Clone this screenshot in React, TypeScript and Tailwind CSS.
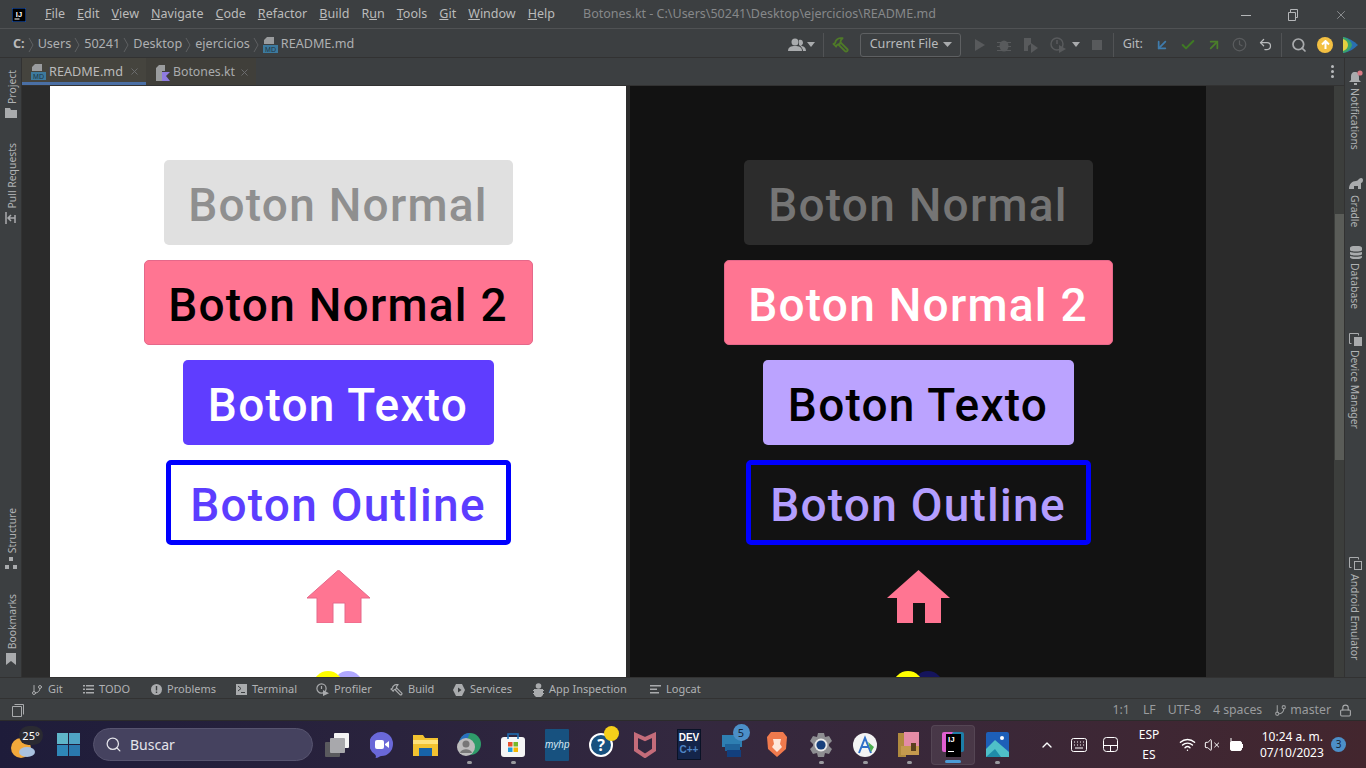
import { ArrowDownLeft, ArrowUpRight, Check, ChevronUp, Clock, GitBranch, Hammer, Lock, Search, Undo2, VolumeX, Wifi, X } from "lucide-react";

const menus: [string, string, string][] = [
  ["", "F", "ile"],
  ["", "E", "dit"],
  ["", "V", "iew"],
  ["", "N", "avigate"],
  ["", "C", "ode"],
  ["", "R", "efactor"],
  ["", "B", "uild"],
  ["R", "u", "n"],
  ["", "T", "ools"],
  ["", "G", "it"],
  ["", "W", "indow"],
  ["", "H", "elp"],
];

function MdIcon() {
  return (
    <svg width="15" height="16" viewBox="0 0 15 16" className="shrink-0">
      <path d="M4 0h7v7H1V3z" fill="#9a9c9e" />
      <rect x="0" y="8" width="15" height="8" fill="#3d7a9e" />
      <text x="7.5" y="15" fontSize="7" textAnchor="middle" fill="#1f3442" fontFamily="Liberation Sans">MD</text>
    </svg>
  );
}

function KtIcon() {
  return (
    <svg width="14" height="16" viewBox="0 0 14 16" className="shrink-0">
      <path d="M3 0h6v6h-3v10H0V3z" fill="#9a9c9e" />
      <path d="M6 7h8l-4 4 4 5H6z" fill="#8f7be0" />
    </svg>
  );
}

function IJLogo({ size = 14 }: { size?: number }) {
  return (
    <svg width={size} height={size} viewBox="0 0 14 14">
      <rect width="14" height="14" fill="#000" stroke="#1b5fd1" strokeWidth="1" />
      <text x="7" y="8.5" fontSize="7.5" fontWeight="700" textAnchor="middle" fill="#fff" fontFamily="Liberation Sans">IJ</text>
      <rect x="2.5" y="10.5" width="5" height="1" fill="#fff" />
    </svg>
  );
}

function TitleBar() {
  return (
    <div className="h-[29px] shrink-0 flex items-center border-b border-[#505254] pt-[1px]">
      <div className="w-[45px] pl-[12px] flex">
        <IJLogo />
      </div>
      <div className="flex gap-[12.1px] text-[12.5px] text-[#bbbbbb]">
        {menus.map(([a, b, c]) => (
          <span key={b + c}>
            {a}
            <u>{b}</u>
            {c}
          </span>
        ))}
      </div>
      <span className="ml-[28px] text-[12.5px] text-[#86888a]">Botones.kt - C:\Users\50241\Desktop\ejercicios\README.md</span>
      <div className="ml-auto flex items-center text-[#b4b6b8]">
        <svg width="12" height="12" viewBox="0 0 12 12" className="mr-[35px]">
          <path d="M1 6.5h10" stroke="currentColor" />
        </svg>
        <svg width="12" height="12" viewBox="0 0 12 12" className="mr-[35px]" fill="none" stroke="currentColor">
          <path d="M1.5 3.5h7v8h-7zM3.5 3.5V.5h7v8h-2" />
        </svg>
        <X size={14} strokeWidth={1.1} className="mr-[18px]" />
      </div>
    </div>
  );
}

function Crumb({ label }: { label: string }) {
  return (
    <>
      <span>{label}</span>
      <svg width="7" height="16" viewBox="0 0 7 16" className="mx-[3px]" fill="none" stroke="#5e6062">
        <path d="M1 1l4 7-4 7" />
      </svg>
    </>
  );
}

function NavBar() {
  return (
    <div className="h-[29px] shrink-0 flex items-center border-b border-[#323232] pt-[3px] text-[12.6px] text-[#aeb0b2]">
      <span className="ml-[13px] font-bold text-[#bbbbbb]">C:</span>
      <svg width="7" height="16" viewBox="0 0 7 16" className="mx-[3px]" fill="none" stroke="#5e6062">
        <path d="M1 1l4 7-4 7" />
      </svg>
      <Crumb label="Users" />
      <Crumb label="50241" />
      <Crumb label="Desktop" />
      <Crumb label="ejercicios" />
      <MdIcon />
      <span className="ml-[3px]">README.md</span>

      <div className="ml-auto flex items-center h-full">
        <svg width="18" height="14" viewBox="0 0 18 14" fill="#a9abad">
          <circle cx="7" cy="4" r="3.5" />
          <path d="M0 13c0-4 3-5 7-5s7 1 7 5z" />
          <path d="M11 2c2-1 4 0 4 3 0 1-1 2-2 3 2 0 5 1 5 5h-3c0-2-2-5-4-6z" />
        </svg>
        <svg width="8" height="5" viewBox="0 0 8 5" className="ml-[1px]" fill="#a9abad">
          <path d="M0 0h8L4 5z" />
        </svg>
        <div className="w-px h-[24px] bg-[#515355] ml-[8px]" />
        <Hammer size={17} color="#4f7a28" strokeWidth={2.6} className="ml-[8px] -scale-x-100" />
        <div className="ml-[11px] w-[101px] h-[24px] border border-[#5e6062] rounded-[3px] flex items-center justify-between pl-[9px] pr-[8px] text-[#b8babc]">
          <span>Current File</span>
          <svg width="9" height="5" viewBox="0 0 9 5" fill="#a9abad">
            <path d="M0 0h9L4.5 5z" />
          </svg>
        </div>
        <svg width="12" height="14" viewBox="0 0 12 14" className="ml-[13px]" fill="#585a5c">
          <path d="M1 1l10 6-10 6z" />
        </svg>
        <svg width="14" height="14" viewBox="0 0 14 14" className="ml-[11px]" fill="#585a5c">
          <ellipse cx="7" cy="8" rx="4.5" ry="5.5" />
          <path d="M0 4h14v1H0zM0 8h14v1H0zM0 12h14v1H0z" />
        </svg>
        <svg width="16" height="16" viewBox="0 0 16 16" className="ml-[12px]" fill="#585a5c">
          <path d="M1 1h7v6L5 9v5H1z" />
          <path d="M8 6l7 5-7 5z" />
        </svg>
        <svg width="17" height="16" viewBox="0 0 17 16" className="ml-[11px]" fill="none" stroke="#585a5c" strokeWidth="1.5">
          <circle cx="7" cy="7" r="6" />
          <path d="M7 3v4" />
          <path d="M9 8l7 4-7 4z" fill="#585a5c" stroke="none" />
        </svg>
        <svg width="8" height="5" viewBox="0 0 8 5" className="ml-[5px]" fill="#a9abad">
          <path d="M0 0h8L4 5z" />
        </svg>
        <div className="ml-[12px] w-[10px] h-[10px] bg-[#585a5c]" />
        <div className="w-px h-[24px] bg-[#515355] ml-[11px]" />
        <span className="ml-[9px] text-[#b8babc]">Git:</span>
        <ArrowDownLeft size={16} color="#3f7cad" strokeWidth={2.6} className="ml-[11px]" />
        <Check size={16} color="#3f7a24" strokeWidth={3} className="ml-[10px]" />
        <ArrowUpRight size={16} color="#4b7f2a" strokeWidth={2.6} className="ml-[10px]" />
        <Clock size={15} color="#5a5c5e" strokeWidth={2} className="ml-[10px]" />
        <Undo2 size={15} color="#b8babc" strokeWidth={2} className="ml-[11px]" />
        <div className="w-px h-[24px] bg-[#515355] ml-[8px]" />
        <Search size={16} color="#a9abad" strokeWidth={2.6} className="ml-[9px]" />
        <div className="ml-[10px] w-[16px] h-[16px] rounded-full bg-[#f3c042] flex items-center justify-center">
          <svg width="9" height="9" viewBox="0 0 9 9" fill="none" stroke="#fff" strokeWidth="2">
            <path d="M4.5 9V2M1 4.5l3.5-3.5L8 4.5" />
          </svg>
        </div>
        <svg width="15" height="16" viewBox="0 0 15 16" className="ml-[10px] mr-[8px]">
          <path d="M0 0c6 1 11 4 15 8-4 4-9 7-15 8z" fill="#2a6fb0" />
          <path d="M0 0c5 1 8 4 9 8-1 4-4 7-9 8z" fill="#3aa36a" />
          <path d="M0 2c3 1 5 3 5 6s-2 5-5 6z" fill="#e3d040" />
        </svg>
      </div>
    </div>
  );
}

function Tabs() {
  return (
    <div className="h-[28px] shrink-0 flex bg-[#3c3f41] border-b border-[#323232]">
      <div className="w-[124px] pl-[9px] pt-[3px] flex items-center gap-[3px] bg-[#45443e] border-b-[3px] border-[#4a6fa5] text-[12.7px] text-[#bbbbbb]">
        <MdIcon />
        <span>README.md</span>
        <X size={11} color="#6e7072" className="ml-[3px]" />
      </div>
      <div className="w-[110px] pl-[10px] flex items-center gap-[3px] bg-[#403f3a] text-[12.3px] text-[#a9abad] pt-[2px]">
        <KtIcon />
        <span>Botones.kt</span>
        <X size={11} color="#6e7072" className="ml-[1px]" />
      </div>
      <div className="ml-auto mr-[10px] flex flex-col justify-center gap-[2px]">
        <div className="w-[3px] h-[3px] rounded-full bg-[#b8babc]" />
        <div className="w-[3px] h-[3px] rounded-full bg-[#b8babc]" />
        <div className="w-[3px] h-[3px] rounded-full bg-[#b8babc]" />
      </div>
    </div>
  );
}

function Preview({ dark }: { dark: boolean }) {
  const btn = "h-[85px] shrink-0 rounded-[5px] flex items-center justify-center pt-[5px] font-['Roboto',sans-serif] font-medium text-[46px] tracking-[1.25px]";
  return (
    <div className={`w-[576px] h-full shrink-0 overflow-hidden flex flex-col items-center pt-[74px] ${dark ? "bg-[#121212]" : "bg-white"}`}>
      <div className={`${btn} w-[349px] ${dark ? "bg-[#2c2c2c] text-[#757575]" : "bg-[#e0e0e0] text-[#8f8f8f]"}`}>Boton Normal</div>
      <div className={`${btn} w-[389px] mt-[15px] bg-[#ff7592] border border-[#e5688a] ${dark ? "text-white" : "text-black"}`}>Boton Normal 2</div>
      <div className={`${btn} w-[311px] mt-[15px] ${dark ? "bg-[#bba3ff] text-black" : "bg-[#5f3dff] text-white"}`}>Boton Texto</div>
      <div className={`${btn} w-[345px] mt-[15px] bg-transparent border-[5px] border-[#0000ff] ${dark ? "text-[#b49eff]" : "text-[#5c3dff]"}`}>Boton Outline</div>
      <svg width="63" height="53" viewBox="0 0 63 53" className="mt-[25px] shrink-0">
        <path d="M31.5 0L63 28h-9v25H38V33H26v20H10V28H0z" fill="#ff7592" stroke={dark ? "none" : "#e5688a"} strokeWidth="1" />
      </svg>
      <div className="mt-[48px] flex shrink-0">
        <div className="w-[30px] h-[30px] rounded-full bg-[#ffff00] relative z-10" />
        <div className={`w-[30px] h-[30px] rounded-full -ml-[10px] ${dark ? "bg-[#14145c]" : "bg-[#b0a8ff]"}`} />
      </div>
    </div>
  );
}

function VText({ children, up }: { children: string; up?: boolean }) {
  return <span className={`block [writing-mode:vertical-rl] text-[10.4px] leading-none text-[#b0b2b4] ${up ? "rotate-180 translate-x-[2px]" : "-translate-x-[1px]"}`}>{children}</span>;
}

function LeftStripe() {
  return (
    <div className="w-[22px] shrink-0 flex flex-col items-center pt-[12px] pb-[12px] border-r border-[#323232]">
      <VText up>Project</VText>
      <svg width="12" height="10" viewBox="0 0 12 10" fill="#a9abad" className="mt-[4px] shrink-0">
        <path d="M0 0h5l1 2h6v8H0z" />
      </svg>
      <div className="mt-[25px]">
        <VText up>Pull Requests</VText>
      </div>
      <svg width="11" height="12" viewBox="0 0 11 12" fill="none" stroke="#a9abad" strokeWidth="1.5" className="mt-[4px] shrink-0">
        <path d="M1 0v12M10 6H4M6 3L3 6l3 3M10 3v8" />
      </svg>
      <div className="mt-auto">
        <VText up>Structure</VText>
      </div>
      <svg width="12" height="12" viewBox="0 0 12 12" fill="#a9abad" className="mt-[3px] shrink-0">
        <path d="M4 0h4v4H4zM0 8h4v4H0zM8 8h4v4H8z" />
      </svg>
      <div className="mt-[25px]">
        <VText up>Bookmarks</VText>
      </div>
      <svg width="10" height="12" viewBox="0 0 10 12" fill="#a9abad" className="mt-[4px] shrink-0">
        <path d="M0 0h10v12L5 8l-5 4z" />
      </svg>
    </div>
  );
}

function RightStripe() {
  return (
    <div className="w-[22px] shrink-0 flex flex-col items-center pt-[12px] border-l border-[#323232]">
      <svg width="14" height="15" viewBox="0 0 14 15" fill="#a9abad" className="shrink-0">
        <path d="M6 2c-3 0-4 2-4 5v3l-2 2h12l-2-2V7c0-3-1-5-4-5zM5 13h3v2H5z" />
        <circle cx="11" cy="3" r="2.6" fill="#d97a85" />
      </svg>
      <div className="mt-[3px]">
        <VText>Notifications</VText>
      </div>
      <svg width="14" height="12" viewBox="0 0 14 12" fill="#a9abad" className="mt-[27px] shrink-0">
        <path d="M0 12c0-5 3-8 7-8 1 0 2-1 3-2 2-2 4-1 4 1s-1 3-2 3v6H9v-3H5v3z" />
      </svg>
      <div className="mt-[6px]">
        <VText>Gradle</VText>
      </div>
      <svg width="12" height="13" viewBox="0 0 12 13" fill="#a9abad" className="mt-[19px] shrink-0">
        <path d="M0 2c0-3 12-3 12 0v2c0 2-12 2-12 0zM0 6c3 1 9 1 12 0v2c0 2-12 2-12 0zM0 10c3 1 9 1 12 0v1c0 3-12 3-12 0z" />
      </svg>
      <div className="mt-[4px]">
        <VText>Database</VText>
      </div>
      <svg width="13" height="13" viewBox="0 0 13 13" fill="none" stroke="#a9abad" className="mt-[24px] shrink-0">
        <path d="M2.5 10.5h-2v-10h9v2" />
        <rect x="5.5" y="4.5" width="7" height="8" fill="#a9abad" />
      </svg>
      <div className="mt-[4px]">
        <VText>Device Manager</VText>
      </div>
      <svg width="13" height="13" viewBox="0 0 13 13" fill="none" stroke="#a9abad" className="mt-auto shrink-0">
        <path d="M2.5 10.5h-2v-10h9v2" />
        <rect x="5.5" y="4.5" width="7" height="8" />
      </svg>
      <div className="mt-[4px] mb-[17px]">
        <VText>Android Emulator</VText>
      </div>
    </div>
  );
}

function Editor() {
  return (
    <div className="flex-1 min-h-0 flex bg-[#2b2b2b]">
      <div className="w-[28px] shrink-0" />
      <Preview dark={false} />
      <div className="w-[4px] shrink-0" />
      <Preview dark />
      <div className="flex-1" />
      <div className="w-[10px] shrink-0 flex flex-col bg-[#3c3e3c]">
        <div className="h-[128px]" />
        <div className="h-[246px] ml-[1px] bg-[#5a5c58]" />
      </div>
    </div>
  );
}

function ToolItem({ icon, label, w }: { icon: React.ReactNode; label: string; w: string }) {
  return (
    <div className={`flex items-center gap-[5px] ${w}`}>
      {icon}
      <span>{label}</span>
    </div>
  );
}

function BottomTools() {
  return (
    <div className="h-[22px] shrink-0 flex items-center pl-[31px] pt-[3px] text-[11px] text-[#b0b2b4] border-t border-b border-[#323232]">
      <ToolItem
        w="w-[52px]"
        label="Git"
        icon={<GitBranch size={12} strokeWidth={2} color="#a9abad" />}
      />
      <ToolItem
        w="w-[68px]"
        label="TODO"
        icon={
          <svg width="11" height="9" viewBox="0 0 11 9" fill="#a9abad">
            <path d="M0 0h2v1.5H0zM3 0h8v1.5H3zM0 3.5h2V5H0zM3 3.5h8V5H3zM0 7h2v1.5H0zM3 7h8v1.5H3z" />
          </svg>
        }
      />
      <ToolItem
        w="w-[85px]"
        label="Problems"
        icon={
          <svg width="11" height="11" viewBox="0 0 11 11">
            <circle cx="5.5" cy="5.5" r="5.5" fill="#a9abad" />
            <path d="M4.8 2h1.4v4.5H4.8zM4.8 7.5h1.4V9H4.8z" fill="#3c3f41" />
          </svg>
        }
      />
      <ToolItem
        w="w-[80px]"
        label="Terminal"
        icon={
          <svg width="11" height="11" viewBox="0 0 11 11">
            <rect width="11" height="11" fill="#a9abad" />
            <path d="M2 2l3 2.5L2 7M5 8.5h4" stroke="#3c3f41" fill="none" />
          </svg>
        }
      />
      <ToolItem
        w="w-[74px]"
        label="Profiler"
        icon={
          <svg width="13" height="13" viewBox="0 0 13 13" fill="none" stroke="#a9abad" strokeWidth="1.2">
            <circle cx="5.5" cy="5.5" r="4.6" />
            <path d="M5.5 3v3" />
            <path d="M7 7l6 3.2-6 2.8z" fill="#a9abad" stroke="none" />
          </svg>
        }
      />
      <ToolItem
        w="w-[63px]"
        label="Build"
        icon={<Hammer size={13} color="#a9abad" strokeWidth={2.2} className="-scale-x-100" />}
      />
      <ToolItem
        w="w-[80px]"
        label="Services"
        icon={
          <svg width="12" height="12" viewBox="0 0 12 12">
            <path d="M3 0h6l3 6-3 6H3L0 6z" fill="#a9abad" />
            <path d="M5 3.5L8.5 6 5 8.5z" fill="#3c3f41" />
          </svg>
        }
      />
      <ToolItem
        w="w-[117px]"
        label="App Inspection"
        icon={
          <svg width="11" height="14" viewBox="0 0 11 14" fill="#a9abad">
            <circle cx="5.5" cy="3" r="2.8" />
            <path d="M1 6h9v6l-2 2H3l-2-2zM0 7h11v1H0zM0 10h11v1H0z" />
          </svg>
        }
      />
      <ToolItem
        w="w-[60px]"
        label="Logcat"
        icon={
          <svg width="11" height="9" viewBox="0 0 11 9" fill="#a9abad">
            <path d="M0 0h11v1.6H0zM0 3.5h7v1.6H0zM0 7h9v1.6H0z" />
          </svg>
        }
      />
    </div>
  );
}

function StatusBar() {
  return (
    <div className="h-[22px] shrink-0 flex items-center pt-[1px] text-[12.3px] text-[#9a9c9e] border-b border-[#2b2b2b]">
      <svg width="13" height="14" viewBox="0 0 13 14" fill="none" stroke="#a9abad" className="ml-[12px]">
        <path d="M2.5 1.5h9v10M.5 3.5h9v10h-9z" />
      </svg>
      <div className="ml-auto flex items-center">
        <span>1:1</span>
        <span className="ml-[13px]">LF</span>
        <span className="ml-[12px]">UTF-8</span>
        <span className="ml-[12px]">4 spaces</span>
        <GitBranch size={13} strokeWidth={2} className="ml-[12px] mr-[3px]" />
        <span>master</span>
        <Lock size={13} strokeWidth={2} className="ml-[8px] mr-[14px]" color="#a9abad" />
      </div>
    </div>
  );
}

function Cell({ children, dot, active }: { children: React.ReactNode; dot?: boolean; active?: boolean }) {
  return (
    <div className={`w-[44px] h-[40px] shrink-0 rounded-[4px] relative flex items-center justify-center ${active ? "bg-[#ffffff14] border border-[#ffffff12]" : ""}`}>
      {children}
      {dot && <div className="absolute bottom-[1px] w-[5px] h-[3px] rounded-full bg-[#9a9a9f]" />}
      {active && <div className="absolute bottom-[1px] w-[16px] h-[3px] rounded-full bg-[#4c9bd6]" />}
    </div>
  );
}

function Taskbar() {
  return (
    <div className="h-[47px] shrink-0 flex items-center bg-gradient-to-r from-[#1e1c3a] via-[#33283f] to-[#43262e] text-white">
      <div className="w-[57px] shrink-0 pl-[11px] relative h-full flex items-center">
        <svg width="24" height="26" viewBox="0 0 24 26" className="mt-[6px]">
          <circle cx="10" cy="13" r="10" fill="#f2a93b" />
          <ellipse cx="16" cy="17" rx="8" ry="5" fill="#a9c2e0" />
        </svg>
        <span className="absolute left-[19px] top-[5px] w-[24px] h-[19px] rounded-full bg-[#2a2a32] text-[11px] text-center leading-[19px]">25°</span>
      </div>
      <svg width="23" height="23" viewBox="0 0 23 23" className="shrink-0">
        <path d="M0 0h11v11H0z" fill="#5fb6c9" />
        <path d="M12 0h11v11H12z" fill="#4fa3c4" />
        <path d="M0 12h11v11H0z" fill="#2f87b8" />
        <path d="M12 12h11v11H12z" fill="#2a78ad" />
      </svg>
      <div className="ml-[13px] w-[220px] h-[33px] shrink-0 rounded-full bg-[#45425f] border border-[#57546f] flex items-center pl-[11px] text-[14px] text-[#e4e4ea]">
        <Search size={17} strokeWidth={1.8} />
        <span className="ml-[8px]">Buscar</span>
      </div>
      <div className="ml-[2px] flex items-center">
        <Cell>
          <svg width="24" height="24" viewBox="0 0 24 24">
            <rect x="0" y="9" width="15" height="15" rx="1" fill="#5a5a5e" />
            <rect x="9" y="0" width="15" height="15" rx="1" fill="#f4f4f4" />
            <rect x="5" y="5" width="15" height="15" rx="1" fill="#a8a8ac" />
          </svg>
        </Cell>
        <Cell>
          <svg width="23" height="26" viewBox="0 0 23 26">
            <path d="M11.5 0a11.5 12 0 0 1 0 24c-2 0-3 2-6 2 1-2 0-3-1-4A12 12 0 0 1 11.5 0z" fill="#6a68d8" />
            <rect x="5" y="8" width="9" height="9" rx="2" fill="#fff" />
            <path d="M15 12l4-3v7l-4-3z" fill="#fff" />
          </svg>
        </Cell>
        <Cell>
          <svg width="25" height="22" viewBox="0 0 25 22">
            <path d="M0 1h10l2 3h13v18H0z" fill="#f2c230" />
            <path d="M0 6h25v4H0z" fill="#ffe27a" />
            <rect x="6" y="14" width="13" height="8" fill="#1763a8" />
          </svg>
        </Cell>
        <Cell dot>
          <svg width="24" height="26" viewBox="0 0 24 26">
            <circle cx="13" cy="12" r="11" fill="#2f9c6a" />
            <path d="M13 1a11 11 0 0 0-11 11h6z" fill="#2a6fc0" />
            <circle cx="9" cy="15" r="9" fill="#bcbcbc" />
            <circle cx="9" cy="12" r="3.5" fill="#777" />
            <path d="M3 21c1-5 11-5 12 0z" fill="#777" />
          </svg>
        </Cell>
        <Cell dot>
          <svg width="24" height="25" viewBox="0 0 24 25">
            <rect x="0" y="5" width="24" height="20" rx="3" fill="#f5f5f5" />
            <path d="M7 7V2h10v5" fill="none" stroke="#1f6fb5" strokeWidth="1.6" />
            <rect x="7" y="10" width="4.5" height="4.5" fill="#e8502d" />
            <rect x="12.5" y="10" width="4.5" height="4.5" fill="#76b82a" />
            <rect x="7" y="15.5" width="4.5" height="4.5" fill="#1f9bdc" />
            <rect x="12.5" y="15.5" width="4.5" height="4.5" fill="#f5b800" />
          </svg>
        </Cell>
        <Cell>
          <div className="w-[24px] h-[32px] bg-[#17517f] rounded-[1px] text-[10px] italic leading-[32px] text-center text-[#d6e6f2] font-['Liberation_Sans',sans-serif]">myhp</div>
        </Cell>
        <Cell>
          <div className="relative">
            <div className="w-[24px] h-[24px] rounded-full bg-[#17517f] border-2 border-white text-[16px] font-bold leading-[20px] text-center">?</div>
            <div className="absolute -right-[6px] -top-[7px] w-[15px] h-[15px] rounded-full bg-[#f5cf1a]" />
          </div>
        </Cell>
        <Cell>
          <svg width="22" height="26" viewBox="0 0 22 26" fill="none" stroke="#c46c7a" strokeWidth="4">
            <path d="M2 3l9 4 9-4v15l-9 6-9-6z" />
          </svg>
        </Cell>
        <Cell>
          <div className="w-[24px] h-[31px] bg-[#14254a] border border-[#0a1226] text-[10px] font-bold leading-[12px] text-center pt-[2px] font-['Liberation_Sans',sans-serif]">
            DEV
            <div className="text-[#4f86c6]">C++</div>
          </div>
        </Cell>
        <Cell>
          <div className="relative">
            <svg width="23" height="25" viewBox="0 0 23 25">
              <rect x="0" y="3" width="20" height="12" fill="#2e7fb2" />
              <rect x="3" y="12" width="15" height="7" fill="#1f639a" />
              <rect x="5" y="18" width="14" height="7" fill="#123f7d" />
            </svg>
            <div className="absolute -right-[5px] -top-[8px] w-[17px] h-[17px] rounded-full bg-[#4c8fc8] text-[#14253a] text-[11px] text-center leading-[17px]">5</div>
          </div>
        </Cell>
        <Cell>
          <svg width="20" height="25" viewBox="0 0 20 25">
            <path d="M4 0h12l4 5-1 12-9 8-9-8L0 5z" fill="#f07a4d" />
            <path d="M6 7h8l-1 5 2 3-5 5-5-5 2-3z" fill="#fde6da" />
          </svg>
        </Cell>
        <Cell dot>
          <svg width="24" height="24" viewBox="0 0 24 24" className="text-[#8e8e92]">
            <path d="M9 0h6l1 4 4-1 3 5-3 3v2l3 3-3 5-4-1-1 4H9l-1-4-4 1-3-5 3-3v-2L1 8l3-5 4 1z" fill="currentColor" />
            <circle cx="12" cy="12" r="6.5" fill="#e8e8e8" />
            <circle cx="12" cy="12" r="4.6" fill="#17407c" />
          </svg>
        </Cell>
        <Cell dot>
          <svg width="24" height="26" viewBox="0 0 24 26">
            <circle cx="12" cy="13" r="12" fill="#f3f3f3" />
            <path d="M6 21l6-15 6 15" fill="none" stroke="#3070c8" strokeWidth="2" />
            <path d="M8 15h8" stroke="#3070c8" strokeWidth="2" />
            <path d="M15 10l6 5-3 5z" fill="#4caf50" />
          </svg>
        </Cell>
        <Cell dot>
          <svg width="23" height="25" viewBox="0 0 23 25">
            <rect x="0" y="1" width="8" height="24" fill="#b08a3e" />
            <rect x="6" y="0" width="15" height="23" fill="#e48ca6" />
            <rect x="3" y="14" width="18" height="9" fill="#c49a4e" />
            <rect x="13" y="11" width="5" height="8" fill="#5a4020" />
          </svg>
        </Cell>
        <Cell active>
          <div className="relative w-[22px] h-[26px]">
            <div className="absolute left-0 top-0 w-[14px] h-[20px] bg-[#e05fd0] rounded-[2px]" />
            <div className="absolute right-0 top-0 w-[12px] h-[20px] bg-[#1d7ea8] rounded-[2px]" />
            <div className="absolute left-[4px] top-[2px] w-[15px] h-[23px] bg-black pl-[2px] text-[8px] font-bold leading-[12px] font-['Liberation_Sans',sans-serif]">
              IJ
              <div className="w-[6px] h-px mt-[5px] bg-white" />
            </div>
          </div>
        </Cell>
        <Cell dot>
          <svg width="23" height="25" viewBox="0 0 23 25">
            <rect width="23" height="25" rx="2" fill="#1d5fb8" />
            <path d="M0 25V17L9 8l14 12v5z" fill="#4fc0c8" />
            <path d="M0 25l9-8 6 8z" fill="#1f8ca8" />
            <circle cx="16" cy="6" r="2" fill="#fff" />
          </svg>
        </Cell>
      </div>
      <div className="ml-auto flex items-center">
        <ChevronUp size={16} strokeWidth={2} />
        <svg width="16" height="14" viewBox="0 0 16 14" fill="none" stroke="#fff" className="ml-[16px]">
          <rect x=".5" y=".5" width="15" height="13" rx="2" />
          <path d="M3 4h1M6 4h1M9 4h1M12 4h1M3 7h1M6 7h1M9 7h1M12 7h1M4 10h8" />
        </svg>
        <svg width="15" height="15" viewBox="0 0 15 15" fill="none" stroke="#fff" className="ml-[16px]">
          <rect x=".5" y=".5" width="14" height="14" rx="3" />
          <path d="M.5 8.5h14M7.5 8.5v6" />
        </svg>
        <div className="ml-[20px] w-[22px] text-[12px] leading-[20px] text-center">
          ESP
          <br />
          ES
        </div>
        <Wifi size={17} strokeWidth={2} className="ml-[19px]" />
        <VolumeX size={16} strokeWidth={1.5} className="ml-[8px]" />
        <svg width="16" height="14" viewBox="0 0 16 14" className="ml-[8px]" fill="none" stroke="#fff">
          <rect x="2.5" y="3.5" width="11" height="9" rx="1.5" fill="#fff" />
          <path d="M14.5 6v4M3 0v5" />
        </svg>
        <div className="ml-[16px] w-[63px] text-[12px] leading-[16px] text-right">
          10:24 a. m.
          <br />
          07/10/2023
        </div>
        <div className="ml-[8px] mr-[20px] w-[15px] h-[15px] rounded-full bg-[#4c8fc8] text-[#14253a] text-[10px] text-center leading-[15px]">3</div>
      </div>
    </div>
  );
}

export default function App() {
  return (
    <div className="w-[1366px] h-[768px] overflow-hidden flex flex-col bg-[#3c3f41] font-['Noto_Sans',sans-serif]">
      <TitleBar />
      <NavBar />
      <div className="flex-1 min-h-0 flex">
        <LeftStripe />
        <div className="flex-1 min-w-0 flex flex-col">
          <Tabs />
          <Editor />
        </div>
        <RightStripe />
      </div>
      <BottomTools />
      <StatusBar />
      <Taskbar />
    </div>
  );
}
